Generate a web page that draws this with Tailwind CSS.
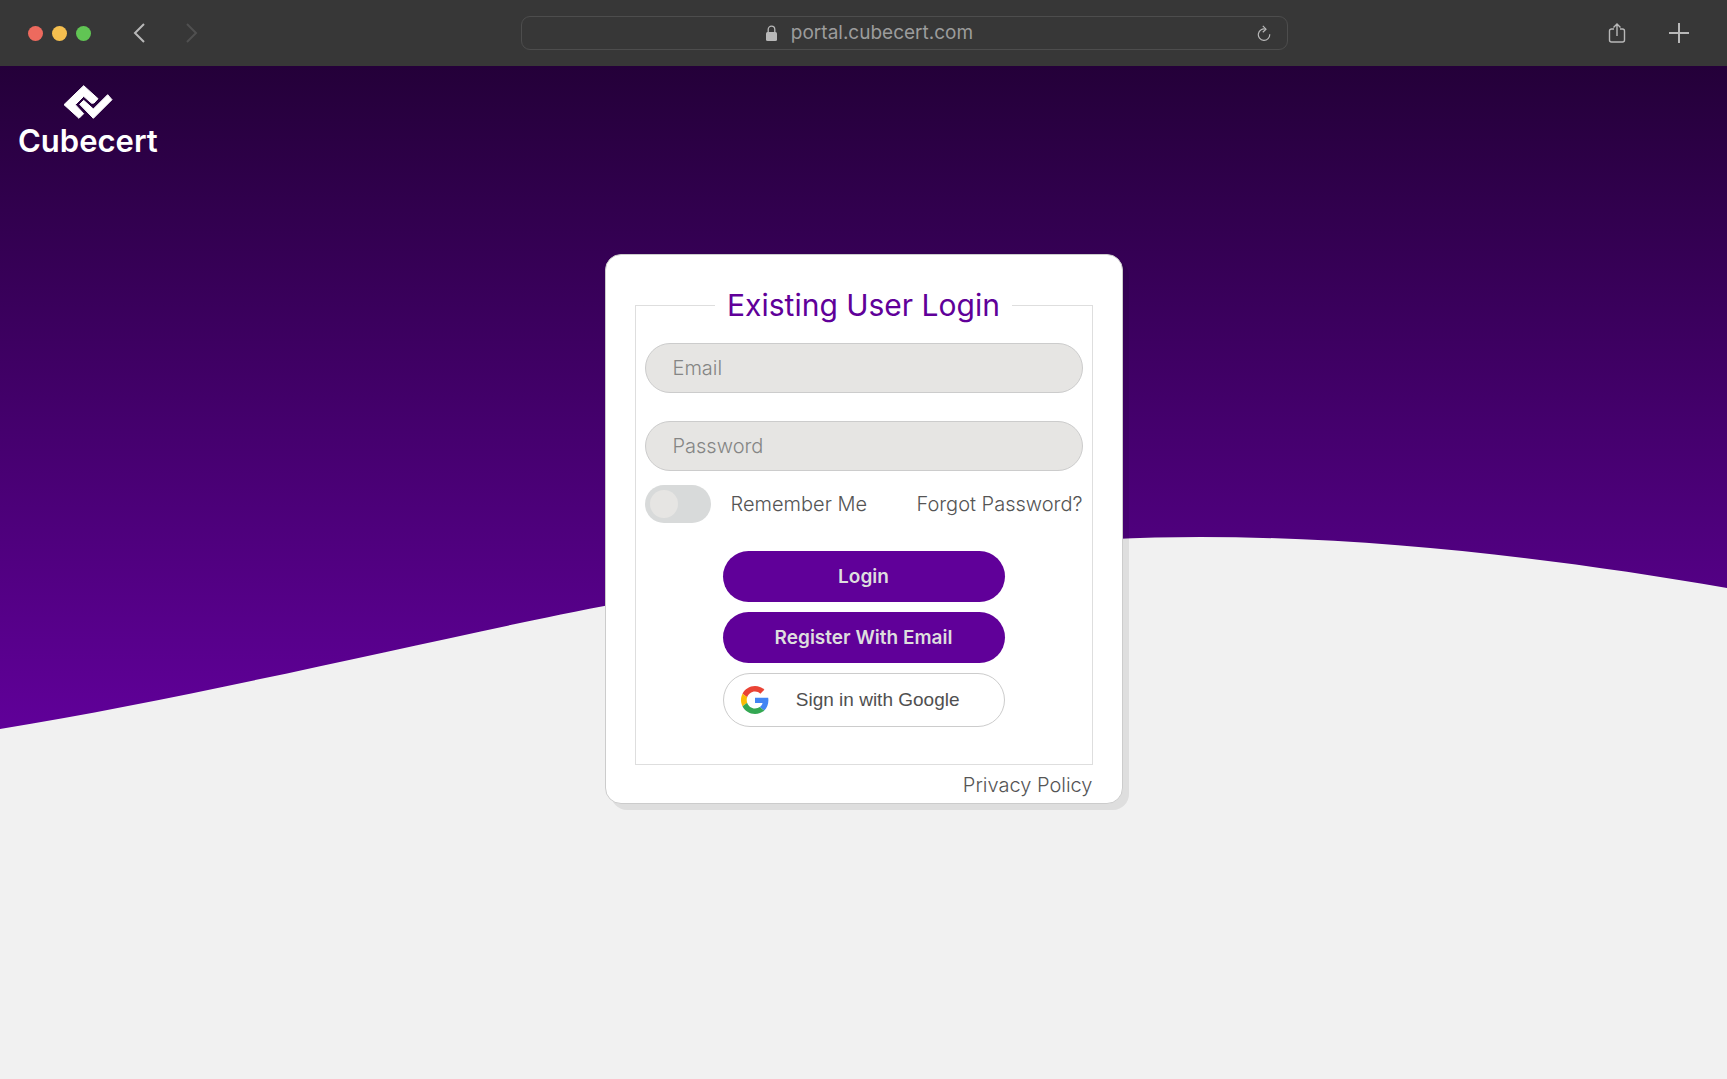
<!DOCTYPE html>
<html lang="en">
<head>
    <meta charset="UTF-8">
    <meta name="viewport" content="width=device-width, initial-scale=1.0">
    <title>Cubecert Login</title>
    <script src="https://cdn.jsdelivr.net/npm/@tailwindcss/browser@4"></script>
</head>
<body class="flex min-h-screen flex-col bg-[#f1f1f1] font-['Inter',sans-serif]">
    <!-- Browser bar -->
    <header class="grid h-[66px] shrink-0 grid-cols-[521fr_767fr_439fr] items-center bg-[#373737] text-[#b8b8b8]">
        <div class="flex items-center pl-7">
            <div class="flex gap-[9px]">
                <span class="size-[15px] rounded-full bg-[#ed6a5e]"></span>
                <span class="size-[15px] rounded-full bg-[#f5bf4f]"></span>
                <span class="size-[15px] rounded-full bg-[#61c554]"></span>
            </div>
            <button type="button" aria-label="Back" class="ml-[37px]">
                <svg class="block h-5 w-6" viewBox="0 0 24 20" fill="none" stroke="currentColor" stroke-width="2"><path d="M16 1 7 10l9 9"/></svg>
            </button>
            <button type="button" aria-label="Forward" class="ml-7 text-[#505050]">
                <svg class="block h-5 w-6" viewBox="0 0 24 20" fill="none" stroke="currentColor" stroke-width="2"><path d="m7 1 9 9-9 9"/></svg>
            </button>
        </div>
        <div class="flex h-[34px] items-center rounded-[9px] border border-[#4d4d4d] px-4">
            <div class="flex flex-1 items-center justify-center gap-[14px] pr-14">
                <svg class="h-4 w-[11px]" viewBox="0 0 11 16" fill="none"><rect y="7" width="11" height="9" rx="1.5" fill="currentColor"/><path d="M2.2 8V4.5a3.3 3.3 0 0 1 6.6 0V8" stroke="currentColor" stroke-width="1.3"/></svg>
                <span class="text-[19px] leading-6 text-[#9c9c9c]">portal.cubecert.com</span>
            </div>
            <button type="button" aria-label="Reload">
                <svg class="block h-4 w-[14px]" viewBox="0 0 14 16" fill="none" stroke="currentColor" stroke-width="1.2"><path d="M8.8 4.2A5.7 5.7 0 1 0 12.7 9.2"/><path d="M5.8 .8 9 4.2 5.8 7.3"/></svg>
            </button>
        </div>
        <div class="flex items-center justify-end gap-[43px] pr-[38px]">
            <button type="button" aria-label="Share">
                <svg class="block h-5 w-[18px]" viewBox="0 0 18 20" fill="none" stroke="currentColor" stroke-width="1.4"><path d="M6 6H3.500A2 2 0 0 0 1.500 8v9a2 2 0 0 0 2 2h11a2 2 0 0 0 2-2V8a2 2 0 0 0-2-2H12M9 13V1.500M5.500 4.500 9 1l3.500 3.500"/></svg>
            </button>
            <button type="button" aria-label="New tab">
                <svg class="block size-5" viewBox="0 0 20 20" stroke="currentColor" stroke-width="2"><path d="M10 0v20M0 10h20"/></svg>
            </button>
        </div>
    </header>

    <main class="relative flex-1">
        <!-- Wave background -->
        <svg class="absolute inset-x-0 top-0 h-[663px] w-full" viewBox="0 0 1727 663" preserveAspectRatio="none" aria-hidden="true">
            <defs>
                <linearGradient id="wave" x1="0" y1="0" x2="0" y2="1">
                    <stop offset="0" stop-color="#240039"/>
                    <stop offset="1" stop-color="#600099"/>
                </linearGradient>
            </defs>
            <path fill="url(#wave)" d="M0 0H1727V522C1560 493 1375 471 1200 471C970 471 700 519 520 557C360 591 170 635 0 663Z"/>
        </svg>

        <a href="#" class="absolute top-[19px] left-[18px] flex flex-col items-center gap-[2px] text-white">
            <svg class="h-[34px] w-[50px]" viewBox="-2 -1 150 102" fill="#fff" stroke="#fff" stroke-width="3" stroke-linejoin="round" aria-hidden="true">
                <path d="M60 1 103 40 91 53 84 54 60 33 35 58 60 85 46 99 1 58Z"/>
                <path d="M60 45 89 71 132 28 145 43 89 99 48 57Z"/>
            </svg>
            <span class="text-[31px] leading-10 font-semibold">Cubecert</span>
        </a>

        <div class="relative px-4 pt-[188px] pb-10">
            <div class="mx-auto max-w-[518px] rounded-2xl border border-[#ccc] bg-white px-[29px] pt-8 pb-[2px] shadow-[6px_6px_0_rgb(0_0_0/0.08)]">
                <form>
                    <fieldset class="border border-[#dedede] px-[9px] pb-[37px]">
                        <legend class="mx-auto px-3 text-[30px] leading-9 text-[#600099]">Existing User Login</legend>
                        <div class="flex flex-col gap-7 pt-5">
                            <input type="email" aria-label="Email" placeholder="Email" class="h-[50px] w-full rounded-full border border-[#ccc] bg-[#e6e5e3] px-[27px] text-xl font-light placeholder:text-[#858585]">
                            <input type="password" aria-label="Password" placeholder="Password" class="h-[50px] w-full rounded-full border border-[#ccc] bg-[#e6e5e3] px-[27px] text-xl font-light placeholder:text-[#858585]">
                        </div>
                        <div class="mt-[14px] flex items-center justify-between text-xl font-light text-[#555]">
                            <label class="flex items-center gap-5">
                                <input type="checkbox" class="h-[38px] w-[66px] appearance-none rounded-full bg-[#d8dada] p-[5px] before:block before:size-7 before:rounded-full before:bg-[#e6e5e3] checked:before:ml-7">
                                Remember Me
                            </label>
                            <a href="#">Forgot Password?</a>
                        </div>
                        <div class="mx-auto mt-7 flex max-w-[282px] flex-col gap-[10px]">
                            <button type="submit" class="h-[51px] rounded-full bg-[#600099] pt-[2px] text-[19px] font-semibold text-[#dedede]">Login</button>
                            <button type="button" class="h-[51px] rounded-full bg-[#600099] pt-[2px] text-[19px] font-semibold text-[#dedede]">Register With Email</button>
                            <button type="button" class="flex h-[54px] items-center rounded-full border border-[#ccc] pr-[44px] pl-[17px] font-['Liberation_Sans',sans-serif] text-[19px] text-[#505050]">
                                <svg class="size-7" viewBox="0 0 48 48" aria-hidden="true">
                                    <path fill="#EA4335" d="M24 9.500c3.540 0 6.710 1.220 9.210 3.600l6.850-6.850C35.900 2.380 30.470 0 24 0 14.620 0 6.510 5.380 2.560 13.220l7.980 6.190C12.430 13.720 17.740 9.500 24 9.500z"/>
                                    <path fill="#4285F4" d="M46.980 24.550c0-1.570-.15-3.090-.38-4.550H24v9.020h12.940c-.58 2.960-2.260 5.480-4.780 7.180l7.730 6c4.510-4.180 7.090-10.360 7.090-17.650z"/>
                                    <path fill="#FBBC05" d="M10.530 28.590c-.48-1.450-.76-2.990-.76-4.590s.27-3.140.76-4.590l-7.980-6.190C.92 16.460 0 20.120 0 24c0 3.880.92 7.540 2.560 10.780l7.970-6.190z"/>
                                    <path fill="#34A853" d="M24 48c6.480 0 11.930-2.130 15.890-5.810l-7.730-6c-2.150 1.450-4.920 2.300-8.160 2.300-6.260 0-11.570-4.220-13.470-9.910l-7.980 6.190C6.510 42.620 14.620 48 24 48z"/>
                                </svg>
                                <span class="ml-auto">Sign in with Google</span>
                            </button>
                        </div>
                    </fieldset>
                </form>
                <div class="mt-1 text-right text-xl leading-8 font-light text-[#555]"><a href="#">Privacy Policy</a></div>
            </div>
        </div>
    </main>
</body>
</html>
